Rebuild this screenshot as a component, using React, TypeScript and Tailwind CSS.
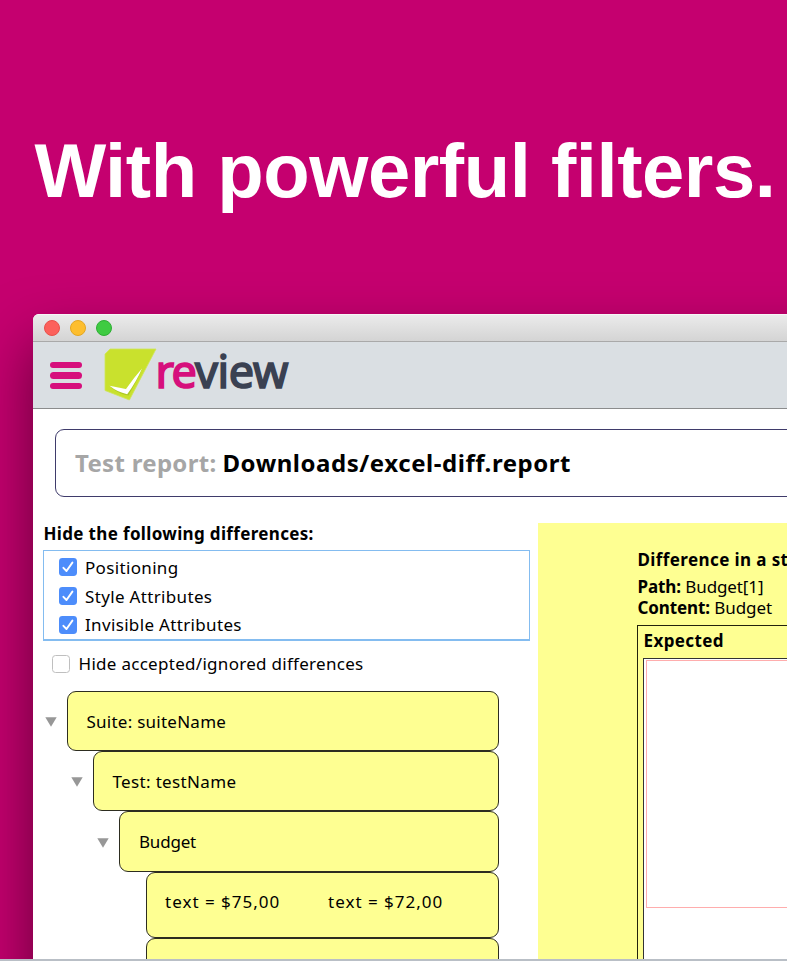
import type { ReactNode } from "react";

function CheckBox({ checked = false }: { checked?: boolean }) {
  if (!checked) {
    return <span className="block h-[18px] w-[18px] shrink-0 rounded-[3.5px] border-[1.5px] border-[#bfbfbf] bg-white" />;
  }
  return (
    <svg className="block h-[18px] w-[18px] shrink-0" viewBox="0 0 18 18" fill="none">
      <rect width="18" height="18" rx="3.4" fill="#4d8dfb" />
      <path d="M4.4 9.8 L7.5 13 L13.4 4.6" stroke="#fff" strokeWidth="1.9" strokeLinecap="round" strokeLinejoin="round" />
    </svg>
  );
}

function FilterRow({ children }: { children: ReactNode }) {
  return (
    <div className="flex h-[28.7px] items-center pl-[14.5px]">
      <CheckBox checked />
      <span className="ml-[8.5px] leading-none">{children}</span>
    </div>
  );
}

function Arrow() {
  return (
    <svg className="mt-[2px] mr-[10px] block h-[10px] w-[12px] shrink-0" viewBox="0 0 12 10">
      <path d="M0.3 0.3 H11.7 L6 9.8 Z" fill="#979797" />
    </svg>
  );
}

const nodeBox = "flex h-full min-w-0 flex-1 items-center rounded-[9px] border-[1.4px] border-[#2d2d20] bg-[#feff92]";

function Logo() {
  return (
    <div className="flex h-full items-start">
      <svg className="mt-[6px] block h-[54px] w-[53px] shrink-0" viewBox="0 0 53 54">
        <path d="M6 1 H52 L25.4 52 L1 42.5 V6 Z" fill="#c9e12d" stroke="#cfe658" strokeWidth="0.8" strokeLinejoin="round" />
        <path d="M6 38.3 C10 42.5 17 46.5 24.5 47.5 C29 39 34 31 38 21 L25 41.5 C19 40.8 12 39.5 6 38.3 Z" fill="#93b41d" opacity="0.55" />
        <path d="M5.5 37.8 L22 41 Q30 29.5 38 20.5 Q32.5 33.5 23.2 46.3 Q13 44 5.5 37.8 Z" fill="#fff" />
      </svg>
      <div className="-mt-px -ml-[1.5px] flex text-[45px] leading-[60px]">
        <span className="w-[39.5px] tracking-[-1.8px] text-[#d60f7c] [-webkit-text-stroke:1.7px_#d60f7c]">re</span>
        <span className="tracking-[-0.3px] text-[#3a4152] [-webkit-text-stroke:1.7px_#3a4152]">view</span>
      </div>
    </div>
  );
}

export default function App() {
  return (
    <div className="relative h-[961px] w-[787px] overflow-hidden bg-[#c5006f] font-['Noto_Sans',sans-serif] text-[17px] text-black">
      <h1 className="h-[314px] pt-[121px] pl-[34.5px] font-['Liberation_Sans',sans-serif] text-[76px] leading-[100px] font-bold tracking-[-0.45px] whitespace-nowrap text-white">
        With powerful filters.
      </h1>

      <div className="ml-[33px] h-[760px] w-[1100px] overflow-hidden rounded-t-[6px] bg-white shadow-[0_30px_60px_rgba(0,0,0,0.5)]">
        <div className="flex h-[28px] items-center gap-[10px] border-t border-b border-t-[#f6f6f6] border-b-[#a9a9a9] bg-linear-to-b from-[#ebebeb] to-[#d4d4d4] pl-[10.5px]">
          <span className="h-4 w-4 rounded-full border border-[#e8504a] bg-[#fc615b]" />
          <span className="h-4 w-4 rounded-full border border-[#e3a622] bg-[#fdbe2e]" />
          <span className="h-4 w-4 rounded-full border border-[#2eae34] bg-[#3fcb42]" />
        </div>

        <header className="flex h-[67px] items-start border-b border-b-[#8b8c8d] bg-[#dadfe3] pl-[17px]">
          <div className="mr-[22px] flex w-8 shrink-0 flex-col gap-[4px] pt-[19.5px]">
            <span className="h-[6.6px] rounded-full bg-[#d60f7c]" />
            <span className="h-[6.6px] rounded-full bg-[#d60f7c]" />
            <span className="h-[6.6px] rounded-full bg-[#d60f7c]" />
          </div>
          <Logo />
        </header>

        <div className="pt-5 pl-[22px]">
          <div className="flex h-[68px] items-center rounded-[9px] border-[1.5px] border-[#3f3b6b] pl-[19px] text-2xl leading-none font-bold whitespace-nowrap">
            <span className="tracking-[0.3px] text-[#a6a6a6]">Test report:</span>
            <span className="ml-[6px] tracking-[0.55px]">Downloads/excel-diff.report</span>
          </div>
        </div>

        <div className="flex pt-[26px]">
          <section className="w-[505px] shrink-0 pl-[10px] tracking-[0.34px]">
            <div className="flex h-[27px] items-center pb-[6px] pl-[0.5px] leading-none font-bold">Hide the following differences:</div>
            <div className="h-[91px] w-[487px] border border-b-2 border-[#84bcf0] pt-[2px]">
              <FilterRow>Positioning</FilterRow>
              <FilterRow>Style Attributes</FilterRow>
              <FilterRow>Invisible Attributes</FilterRow>
            </div>
            <div className="flex h-[50px] items-center pb-[5px] pl-[9px] tracking-[0.29px]">
              <CheckBox />
              <span className="ml-[8.5px] leading-none">Hide accepted/ignored differences</span>
            </div>

            <div className="w-[455.5px]">
              <div className="flex h-[60px] items-center pl-[2px]">
                <Arrow />
                <div className={nodeBox + " pt-px pl-[18.5px] tracking-[0.25px]"}>Suite: suiteName</div>
              </div>
              <div className="flex h-[60px] items-center pl-[28px]">
                <Arrow />
                <div className={nodeBox + " pt-[2px] pl-[18.5px]"}>Test: testName</div>
              </div>
              <div className="flex h-[61px] items-center pl-[54px]">
                <Arrow />
                <div className={nodeBox + " pl-[19px] tracking-[-0.2px]"}>Budget</div>
              </div>
              <div className="flex h-[66px] items-center pl-[102.5px]">
                <div className={nodeBox + " pb-[7px] pl-[18.5px] tracking-[1px]"}>
                  <span className="w-[163px]">text = $75,00</span>
                  <span>text = $72,00</span>
                </div>
              </div>
              <div className="flex h-[66px] items-center pl-[102.5px]">
                <div className={nodeBox} />
              </div>
            </div>
          </section>

          <section className="h-[460px] flex-1 bg-[#feff92] pt-[26px] pl-[99px] whitespace-nowrap">
            <div className="h-[24px] pl-[0.5px] leading-[21px] font-bold tracking-[0.4px]">Difference in a st</div>
            <div className="mt-[3px] pl-[0.5px] leading-[21px] tracking-[-0.1px]">
              <b>Path:</b> Budget[1]
            </div>
            <div className="pl-[0.5px] leading-[21px] tracking-[-0.1px]">
              <b>Content:</b> Budget
            </div>
            <div className="mt-[7px] h-[400px] border-[1.5px] border-[#22220c] pl-[5px]">
              <div className="h-[32px] pl-[0.5px] leading-[29px] font-bold tracking-[0.4px]">Expected</div>
              <div className="h-[360px] border-[1.5px] border-[#333] bg-white pt-[1px] pl-[2px]">
                <div className="h-[248px] border border-[#ffadad]" />
              </div>
            </div>
          </section>
        </div>
      </div>
      <div className="absolute inset-x-0 bottom-0 h-[2px] bg-[#b9bfc6]" />
    </div>
  );
}
